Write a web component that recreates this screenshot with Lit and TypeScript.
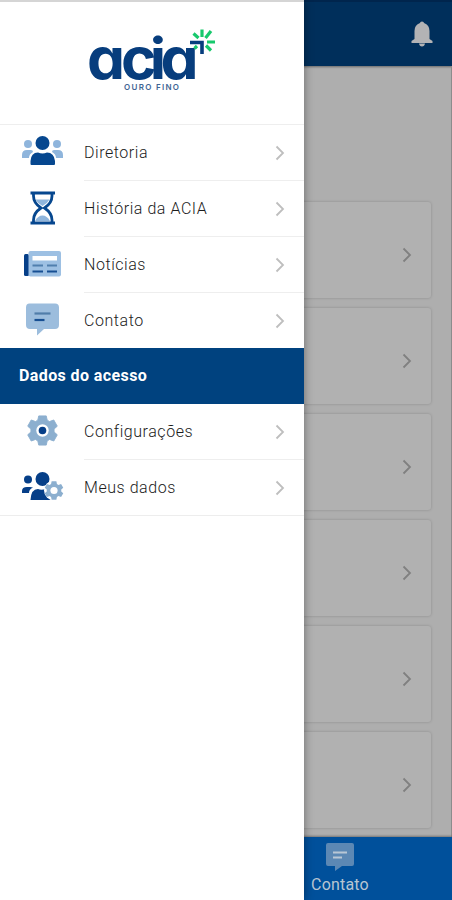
import { LitElement, html, css, svg } from "lit";
import { customElement, property } from "lit/decorators.js";

const gearPath = "M-4-15.500H4L5-11A12 12 0 0 1 7.500-9.500L12-11.200L15.700-4.600L12.300-1.500V1.500L15.700 4.600L12 11.200L7.500 9.500A12 12 0 0 1 5 11L4 15.500H-4L-5 11A12 12 0 0 1-7.500 9.500L-12 11.200L-15.700 4.600L-12.300 1.500V-1.500L-15.700-4.600L-12-11.200L-7.500-9.500A12 12 0 0 1-5-11Z";

const icons: Record<string, unknown> = {
  people: svg`
    <g fill="#8fb5dc"><circle cx="7" cy="12" r="4"/><circle cx="36" cy="12" r="4"/>
    <path d="M1 26V23Q1 18 6 18H10Q12 18 12 20Q8 22 8 26ZM42 26V23Q42 18 37 18H33Q31 18 31 20Q35 22 35 26Z"/></g>
    <g fill="#06478f"><circle cx="21.500" cy="11" r="7"/><path d="M9.500 32V29Q10 20.500 17 20.500Q21.500 22.500 26 20.500Q33 20.500 34 29V32Q34 33 33 33H10.500Q9.500 33 9.500 32Z"/></g>`,
  hourglass: svg`
    <path d="M14.500 11.500H28.500Q26 16 21.500 18Q17 16 14.500 11.500ZM14 33Q17 27.500 21.500 27.500Q26 27.500 29 33Z" fill="#8fb5dc"/>
    <path d="M12.500 5V8Q12.500 15 20 20Q12.500 25 12.500 32V35M31 5V8Q31 15 23.500 20Q31 25 31 32V35" fill="none" stroke="#06478f" stroke-width="2.800"/>
    <path d="M9.500 5H34M9.500 35H34" stroke="#06478f" stroke-width="3"/>`,
  news: svg`
    <rect x="3" y="10" width="5" height="22" rx="1.500" fill="#063f88"/>
    <rect x="7.500" y="7" width="32.500" height="25.500" rx="2" fill="#9dc0e3"/>
    <rect x="11.500" y="12" width="24.500" height="4.500" fill="#fff"/>
    <path d="M11.500 21.500H22M26 21.500H36" stroke="#507fae" stroke-width="2"/>
    <path d="M11.500 27.500H22M26 27.500H36" stroke="#174f93" stroke-width="2"/>`,
  chat: svg`
    <path d="M8.500 3.500H34Q38 3.500 38 7.500V25Q38 29 34 29H23L16 35.500V29H9Q5 29 5 25V7.500Q5 3.500 8.500 3.500Z" fill="#9cbddd"/>
    <path d="M13.500 13.500H29.500" stroke="#507da9" stroke-width="2.200"/><path d="M13.500 20H23.500" stroke="#174f93" stroke-width="2.200"/>`,
  gear: svg`
    <path transform="translate(21.500 19.500) scale(.94)" d=${gearPath} fill="#8cafcf" stroke="#8cafcf" stroke-linejoin="round"/>
    <circle cx="21.500" cy="19.500" r="6.200" fill="#fff"/><circle cx="21.500" cy="19.500" r="3.800" fill="#063f88"/>`,
  userGear: svg`
    <g fill="#063f88"><circle cx="7" cy="12.500" r="4"/><circle cx="21.500" cy="12" r="7"/>
    <path d="M1 26V24Q1 20 6 20H9L12 20.500Q8 22 8 26ZM9.500 33Q10 22 17 22Q20 23.500 25 22L30 33Z"/></g>
    <circle cx="33" cy="23.500" r="10" fill="#fff"/>
    <path transform="translate(33 23.500) scale(.59)" d=${gearPath} fill="#8cafcf"/>
    <circle cx="33" cy="23.500" r="3.600" fill="#fff"/>`,
};

@customElement("chevron-icon")
class ChevronIcon extends LitElement {
  static styles = css`:host { display: block; width: 10px; height: 16px } svg { display: block }`;
  render() {
    return html`<svg width="10" height="16" viewBox="0 0 10 16"><path d="M1.500 1.500L8 8L1.500 14.500" fill="none" stroke="currentColor" stroke-width="1.800"/></svg>`;
  }
}

@customElement("menu-row")
class MenuRow extends LitElement {
  @property() icon = "";
  @property() label = "";
  @property({ type: Boolean }) last = false;
  static styles = css`
    :host { display: flex; height: 56px; box-sizing: border-box; padding-left: 21px }
    .icon { width: 44px; height: 40px; margin: 7px 19px 0 0; flex: none }
    .body { flex: 1; display: flex; align-items: center; justify-content: space-between; box-sizing: border-box; padding: 0 19px 0 0; border-bottom: 1px solid #eee; font: 300 16px/20px Roboto, sans-serif; letter-spacing: .55px; color: #1c1c1c }
    :host([last]) { border-bottom: 1px solid #ededed }
    :host([last]) .body { border-bottom: 0 }
    chevron-icon { color: #bebebe }
  `;
  render() {
    return html`<svg class="icon" viewBox="0 0 44 40">${icons[this.icon]}</svg>
      <div class="body"><span>${this.label}</span><chevron-icon></chevron-icon></div>`;
  }
}

@customElement("acia-logo")
class AciaLogo extends LitElement {
  static styles = css`
    :host { display: block; width: 130px; height: 70px }
    svg { display: block; overflow: visible }
    .name { font: 700 57px Inter, sans-serif; font-feature-settings: "cv11"; fill: #073d7d }
    .city { font: 600 8px Inter, sans-serif; fill: #3f6594 }
  `;
  render() {
    return html`<svg width="130" height="70" viewBox="0 0 130 70">
      <text class="name" transform="scale(1.06 1)" x="0 32 59.300 69.300" y="48.500">acia</text>
      <text class="city" x="37" y="60" textLength="55">OURO FINO</text>
      <g stroke="#18c96d" stroke-width="3.200" fill="none">
        <path d="M111.500 8L106.500 3.500M115 7V-.500M118.500 8L124 1M120 12H128M119 15.500L124 20.500M107.500 18.500L110 16"/>
      </g>
      <path d="M103 12.500H115V24" fill="none" stroke="#073d7d" stroke-width="3.600"/>
    </svg>`;
  }
}

@customElement("app-root")
class AppRoot extends LitElement {
  static styles = css`
    :host { display: grid; width: 452px; height: 900px; overflow: hidden; font-family: Roboto, sans-serif; background: #aeaeae }
    .page, .drawer { grid-area: 1 / 1 }
    .page { display: flex; flex-direction: column; min-width: 0; height: 900px; box-sizing: border-box }
    .top { height: 66px; flex: none; display: flex; justify-content: flex-end; align-items: center; box-sizing: border-box; padding: 0 19px 0 0; background: #002f5b; box-shadow: 0 1px 2px #0006; border-top: 2px solid #00254d }
    .cards { flex: 1; display: flex; flex-direction: column; gap: 10px; padding: 136px 20px 0 16px; border-right: 1px solid #8c8c8c }
    .card { height: 96px; box-sizing: border-box; display: flex; align-items: center; justify-content: flex-end; padding: 9px 19px 0 0; border-radius: 3px; background: #b1b1b1; box-shadow: 0 0 3px #0003; color: #808080 }
    .tabs { height: 63px; flex: none; box-sizing: border-box; padding-left: 304px; background: #00509b; box-shadow: 0 -1px 2px #0005 }
    .tab { width: 72px; display: flex; flex-direction: column; align-items: center; color: #b9c5d2; font-size: 16px; line-height: 20px; letter-spacing: .2px }
    .tab svg { margin: 5px 0 3px; display: block }
    .drawer { position: relative; width: 304px; height: 900px; background: #fff; box-shadow: 0 0 9px #0006; box-sizing: border-box }
    .brand { height: 125px; box-sizing: border-box; padding: 28px 0 0 87px; border-top: 2px solid #d5d5d5; border-bottom: 1px solid #eee }
    .section { position: relative; height: 56px; margin-top: -1px; box-sizing: border-box; padding: 0 19px; display: flex; align-items: center; background: #00427f; color: #fff; font: 700 16px/20px Roboto, sans-serif; letter-spacing: .4px }
  `;
  render() {
    return html`
      <main class="page">
        <header class="top"><svg width="22" height="26" viewBox="0 0 22 26"><path d="M9 2Q9 .500 11 .500T13 2Q18.500 4 18.500 10V18L21.500 20V22H.500V20L3.500 18V10Q3.500 4 9 2ZM8 22.500H14Q13.500 25.500 11 25.500T8 22.500Z" fill="#b3b3b5"/></svg></header>
        <section class="cards">${[0, 1, 2, 3, 4, 5].map(() => html`<div class="card"><chevron-icon></chevron-icon></div>`)}</section>
        <nav class="tabs"><div class="tab">
          <svg width="30" height="30" viewBox="0 0 30 30"><path d="M3 1H27Q29 1 29 3V22Q29 24 27 24H17L10 29V24H3Q1 24 1 22V3Q1 1 3 1Z" fill="#5c88b4"/><path d="M8 10.500H22M8 15.500H17" stroke="#b9c7d5" stroke-width="2"/></svg>
          <span>Contato</span></div></nav>
      </main>
      <aside class="drawer">
        <div class="brand"><acia-logo></acia-logo></div>
        <menu-row icon="people" label="Diretoria"></menu-row>
        <menu-row icon="hourglass" label="História da ACIA"></menu-row>
        <menu-row icon="news" label="Notícias"></menu-row>
        <menu-row icon="chat" label="Contato"></menu-row>
        <div class="section">Dados do acesso</div>
        <menu-row icon="gear" label="Configurações"></menu-row>
        <menu-row icon="userGear" label="Meus dados" last></menu-row>
      </aside>`;
  }
}
